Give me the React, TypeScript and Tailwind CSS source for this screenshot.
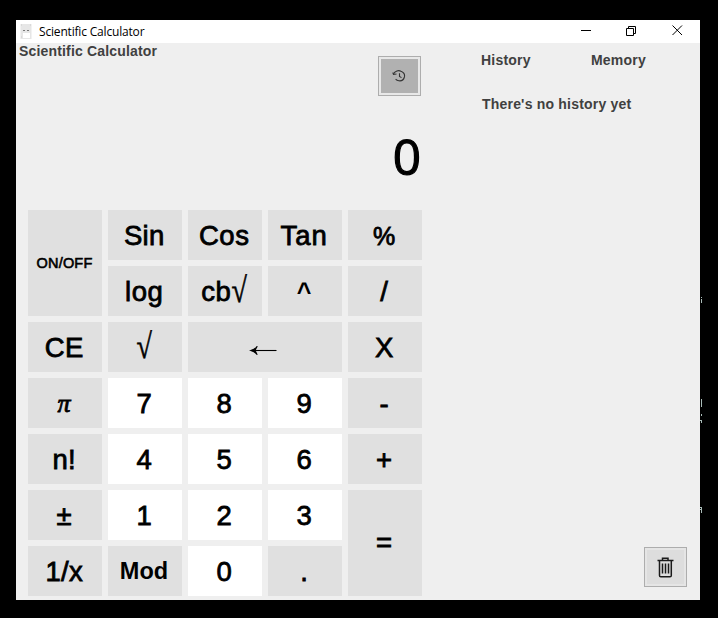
import React from 'react';

type Key = { label: React.ReactNode; cell?: string; text?: string };

const digit = 'bg-white';

const Arrow = () => (
  <svg width="28" height="12" viewBox="0 0 28 12" className="mt-[6px] mr-[2px]" fill="none" stroke="#000">
    <path d="M2 5.500H27.500" strokeWidth="1.100" />
    <path d="M8.300 1.200C6.800 3.300 4.500 4.800 1.800 5.500C4.500 6.200 6.800 7.700 8.300 9.800C7 7.500 6.300 6.500 6.300 5.500C6.300 4.500 7 3.500 8.300 1.200Z" strokeWidth="1.100" fill="#000" />
  </svg>
);

const Root = () => (
  <span className="relative top-[2px] inline-block origin-bottom scale-y-[1.25] font-['Liberation_Serif',serif] text-[28px] leading-[28px] [-webkit-text-stroke-width:0.5px]">√</span>
);

const keys: Key[] = [
  { label: 'ON/OFF', cell: 'row-span-2', text: 'text-[14.5px] tracking-[0.2px] [-webkit-text-stroke-width:0.6px] mr-[1px] mb-[2px]' },
  { label: 'Sin' },
  { label: 'Cos', text: 'tracking-[0.6px]' },
  { label: 'Tan', text: 'tracking-[1px]' },
  { label: '%', text: 'text-[25px]' },
  { label: 'log', text: 'tracking-[0.6px]' },
  { label: <>cb<Root /></>, text: 'tracking-[0.6px]' },
  { label: '^', text: 'text-[25px] font-bold [-webkit-text-stroke-width:0px]' },
  { label: '/' },
  { label: 'CE' },
  { label: <Root /> },
  { label: <Arrow />, cell: 'col-span-2' },
  { label: 'X' },
  { label: 'π', text: "font-['Liberation_Serif',serif] italic text-[26px]" },
  { label: '7', cell: digit },
  { label: '8', cell: digit },
  { label: '9', cell: digit },
  { label: '-' },
  { label: 'n!' },
  { label: '4', cell: digit },
  { label: '5', cell: digit },
  { label: '6', cell: digit },
  { label: '+' },
  { label: '±' },
  { label: '1', cell: digit },
  { label: '2', cell: digit },
  { label: '3', cell: digit },
  { label: '=', cell: 'row-span-2', text: 'mb-[2px]' },
  { label: '1/x' },
  { label: 'Mod', text: 'text-[23.5px] font-bold tracking-[0.1px] [-webkit-text-stroke-width:0px] mr-[2px]' },
  { label: '0', cell: digit },
  { label: '.' },
];

function KeyButton({ label, cell = '', text = '' }: Key) {
  const background = cell === digit ? '' : 'bg-[#e0e0e0]';
  const base = text.includes('text-[') ? '' : 'text-[27.5px]';
  const track = text.includes('tracking-') ? '' : 'tracking-[0.3px]';
  const family = text.includes('font-[') ? '' : "font-['Liberation_Sans',sans-serif]";
  const stroke = text.includes('stroke-width') ? '' : '[-webkit-text-stroke-width:0.8px]';
  const margin = text.includes('mr-[') ? '' : 'mr-[1.5px]';
  return (
    <button className={`flex items-center justify-center pt-[2px] ${background} ${cell}`}>
      <span className={`leading-none whitespace-nowrap ${base} ${track} ${family} ${stroke} ${margin} ${text}`}>{label}</span>
    </button>
  );
}

function TitleBar() {
  return (
    <header className="flex h-[23px] items-center bg-white">
      <svg width="12" height="15" viewBox="0 0 12 15" className="ml-[4px]">
        <rect width="11" height="15" x="0.5" fill="#e6e6e6" />
        <path d="M3 9h7v5H3z" fill="#fff" />
        <path d="M3 6.500h2M7 6.500h2" stroke="#777" />
        <path d="M1 1h1M10 1h1M1 13h1" stroke="#ccc" />
      </svg>
      <span className="mt-px ml-[7px] font-['Open_Sans',sans-serif] text-[12px] leading-none tracking-[-0.18px] text-black">
        Scientific Calculator
      </span>
      <svg width="104" height="14" viewBox="0 0 104 14" className="mr-[15px] mb-px ml-auto" fill="none" stroke="#000">
        <path d="M0 6.500H10" />
        <path d="M45.500 4.500h7v7h-7zM47.500 4.500v-2h7v7h-2" />
        <path d="M91.500 1.500L101 11M101 1.500L91.500 11" />
      </svg>
    </header>
  );
}

const label = "font-['Liberation_Sans',sans-serif] text-[14px] font-bold leading-[16px] text-[#404040] whitespace-nowrap";

export default function App() {
  return (
    <div className="relative h-[618px] w-[718px] overflow-hidden bg-black pt-[20px] pl-[16px]">
      <main className="flex h-[580px] w-[684px] flex-col bg-[#efefef] text-black">
        <TitleBar />
        <div className="flex flex-1">
          <section className="w-[406px]">
            <div className="flex h-[167px] flex-col">
              <div className="flex justify-between">
                <h1 className={`${label} ml-[3px] tracking-[0.17px]`}>Scientific Calculator</h1>
                <button className="mt-[13px] mr-px flex h-[40px] w-[43px] items-center justify-center border border-[#adadad] bg-[#e8e8e8] p-[2px]">
                  <span className="flex h-full w-full items-center justify-center bg-[#b1b1b1]">
                    <svg width="14" height="12" viewBox="0 0 14 12" className="mr-px" fill="none" stroke="#333" strokeWidth="1.100">
                      <path d="M1.500 4C3 .8 6.500 0 9 1.200C11.500 2.200 13 4.500 12.400 7C11.700 9.600 9.300 11.200 6.800 10.800C5.500 10.600 4.400 10 3.600 9.200" />
                      <path d="M.8 2.500L1.500 4.500L4.500 4M7.500 3.200V6.400L9.500 7.600" />
                    </svg>
                  </span>
                </button>
              </div>
              <div className="mt-[32px] flex justify-end pr-px font-['Open_Sans',sans-serif] text-[49.5px] leading-[56px] [-webkit-text-stroke-width:1.2px]">0</div>
            </div>
            <div className="ml-[12px] grid w-[394px] grid-cols-[repeat(5,74px)] grid-rows-[repeat(7,50px)] gap-[6px]">
              {keys.map((key, i) => (
                <KeyButton key={i} {...key} />
              ))}
            </div>
          </section>
          <aside className="ml-[59px] flex w-[206px] flex-col">
            <div className="mt-[9px] flex">
              <span className={`${label} w-[110px] tracking-[0.2px]`}>History</span>
              <span className={`${label} tracking-[0.2px]`}>Memory</span>
            </div>
            <p className={`${label} mt-[28px] ml-[1px] tracking-[0.2px]`}>There's no history yet</p>
            <button className="mt-auto mb-[13px] flex h-[40px] w-[43px] items-center justify-center self-end border border-[#adadad] bg-[#e5e5e5] p-[2px]">
              <span className="flex h-full w-full items-center justify-center bg-[#dddddd]">
                <svg width="17" height="21" viewBox="0 0 17 21" fill="none" stroke="#1a1a1a" strokeWidth="1.500">
                  <path d="M.5 3.500H16.500M5.500 3.500V1.300H11V3.500M2.500 4V18.500Q2.500 19.800 3.800 19.800H13Q14.300 19.800 14.300 18.500V4" />
                  <path d="M5.500 6.500V16.500M8.500 6.500V16.500M11.500 6.500V16.500" strokeWidth="1.500" />
                </svg>
              </span>
            </button>
          </aside>
        </div>
      </main>
      <svg width="2" height="220" viewBox="0 0 2 220" className="absolute top-[295px] left-[700px]" fill="#a9bcb8">
        <path d="M1 2h1v1h-1zM1 4h1v4h-1zM1 104h1v8h-1zM1 119h1v2h-1zM1 125h1v3h-1zM0 125h1v1H0zM0 212h2v1H0zM0 214h2v1H0zM1 212h1v6h-1z" />
      </svg>
    </div>
  );
}
